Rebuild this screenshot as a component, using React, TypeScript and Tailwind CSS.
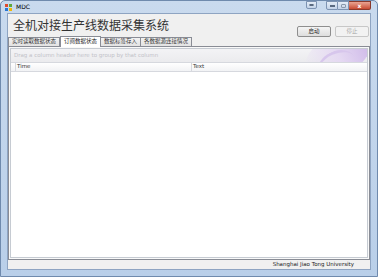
import React from 'react';

const cjk = { fontFamily: '"Noto Sans CJK SC", "Noto Sans", sans-serif' };
const latin = { fontFamily: '"DejaVu Sans", "Liberation Sans", sans-serif' };

const tabs = ['实时读取数据状态', '订阅数据状态', '数据标签存入', '各数据源连接情况'];

const App: React.FC = () => {
  return (
    <div className="w-[378px] h-[277px] overflow-hidden bg-[#e9eef5]">
      <div className="w-full h-full flex flex-col rounded-t-[5px] border border-[#6f8aad] bg-gradient-to-b from-[#c9daee] to-[#b9cfe9]">
        {/* title bar */}
        <div className="h-[12px] flex items-center px-[4px] relative">
          <div className="w-[7px] h-[7px] grid grid-cols-2 gap-[1px] mr-[4px]">
            <div className="bg-[#e04a2a]" />
            <div className="bg-[#5ca93a]" />
            <div className="bg-[#2a77d4]" />
            <div className="bg-[#f2b705]" />
          </div>
          <span className="text-[6px] leading-none text-black" style={latin}>MDC</span>
          <div className="ml-auto flex items-start h-full gap-[9px] mr-[2px]">
            <div className="w-[11px] h-[8px] rounded-b-[2px] border border-[#7d93b2] bg-gradient-to-b from-[#e4ecf6] to-[#c3d3e8] flex items-center justify-center">
              <div className="w-[5px] h-[2px] border border-[#5a6a80] rounded-[1px]" />
            </div>
            <div className="flex">
              <div className="w-[12px] h-[9px] rounded-bl-[2px] border border-[#7d93b2] bg-gradient-to-b from-[#e4ecf6] to-[#c3d3e8] flex items-end justify-center pb-[2px]">
                <div className="w-[5px] h-[2px] bg-[#5a6a80]" />
              </div>
              <div className="w-[11px] h-[9px] border-y border-r border-[#7d93b2] bg-gradient-to-b from-[#e4ecf6] to-[#c3d3e8] flex items-center justify-center">
                <div className="w-[5px] h-[4px] border border-[#8a98ab] rounded-[1px]" />
              </div>
              <div className="w-[22px] h-[9px] rounded-br-[2px] border-y border-r border-[#8a3a2c] bg-gradient-to-b from-[#e8a493] to-[#c74a32] flex items-center justify-center">
                <span className="text-[6px] leading-none text-white font-bold" style={latin}>x</span>
              </div>
            </div>
          </div>
        </div>

        {/* client area */}
        <div className="flex-1 mx-[6px] border border-[#8ea4c2] bg-[#f0f0f0] flex flex-col">
          <div className="flex items-start h-[21px]">
            <div className="pl-[5px] pt-[3px] text-[12px] leading-[16px] text-[#333]" style={cjk}>全机对接生产线数据采集系统</div>
            <div className="ml-auto mt-[12px] mr-[1px] flex gap-[4px]">
              <button className="w-[34px] h-[11px] border border-[#8e8e8e] rounded-[2px] bg-gradient-to-b from-[#f4f4f4] to-[#dedede] text-[5.5px] leading-none text-[#222]" style={cjk}>启动</button>
              <button className="w-[34px] h-[11px] border border-[#c7c7c7] rounded-[2px] bg-[#f2f2f2] text-[5.5px] leading-none text-[#a8a8a8]" style={cjk}>停止</button>
            </div>
          </div>

          {/* tabs */}
          <div className="flex items-end h-[11px]">
            {tabs.map((t, i) =>
              i === 1 ? (
                <div key={t} className="h-[11px] px-[3px] border-x border-t border-[#898c95] bg-white -mb-px relative z-10 flex items-center text-[5.5px] leading-none text-[#222]" style={cjk}>{t}</div>
              ) : (
                <div key={t} className="h-[9px] px-[3px] border-x border-t border-[#898c95] bg-gradient-to-b from-[#f2f2f2] to-[#e3e3e3] -ml-px first:ml-0 flex items-center text-[5.5px] leading-none text-[#333]" style={cjk}>{t}</div>
              )
            )}
          </div>

          {/* tab page */}
          <div className="flex-1 border border-[#898c95] bg-[#f9f9f9] p-[1px] flex flex-col">
            <div className="flex-1 border border-[#c6cbd2] bg-white flex flex-col">
              <div className="h-[14px] relative overflow-hidden bg-gradient-to-b from-[#f3f3f5] to-[#ebebee] flex items-center px-[3px] border-b border-[#d6d8de]">
                <span className="text-[5.5px] leading-none text-[#c2c2c8]" style={latin}>Drag a column header here to group by that column</span>
                <div className="absolute right-[-6px] top-[-14px] w-[70px] h-[40px] rounded-[50%] bg-gradient-to-r from-transparent via-[#e5d9f2] to-[#cdb7e8] rotate-[-25deg]" />
                <div className="absolute right-[10px] top-[2px] w-[40px] h-[30px] rounded-[50%] border-t-[3px] border-[#d7c6ec] rotate-[-25deg]" />
              </div>
              <div className="h-[9px] flex border-b border-[#d6d8de] bg-gradient-to-b from-white to-[#f2f3f5] text-[5.5px] leading-none text-[#333]" style={latin}>
                <div className="w-[5px] border-r border-[#d6d8de]" />
                <div className="w-[176px] border-r border-[#d6d8de] flex items-center pl-[1px]">Time</div>
                <div className="flex-1 flex items-center pl-[1px]">Text</div>
              </div>
              <div className="flex-1 bg-white" />
            </div>
          </div>

          {/* status bar */}
          <div className="h-[9px] flex items-center justify-end pr-[16px]">
            <span className="text-[5.5px] leading-none text-[#222]" style={latin}>Shanghai Jiao Tong University</span>
          </div>
        </div>
        <div className="h-[6px]" />
      </div>
    </div>
  );
};

export default App;
